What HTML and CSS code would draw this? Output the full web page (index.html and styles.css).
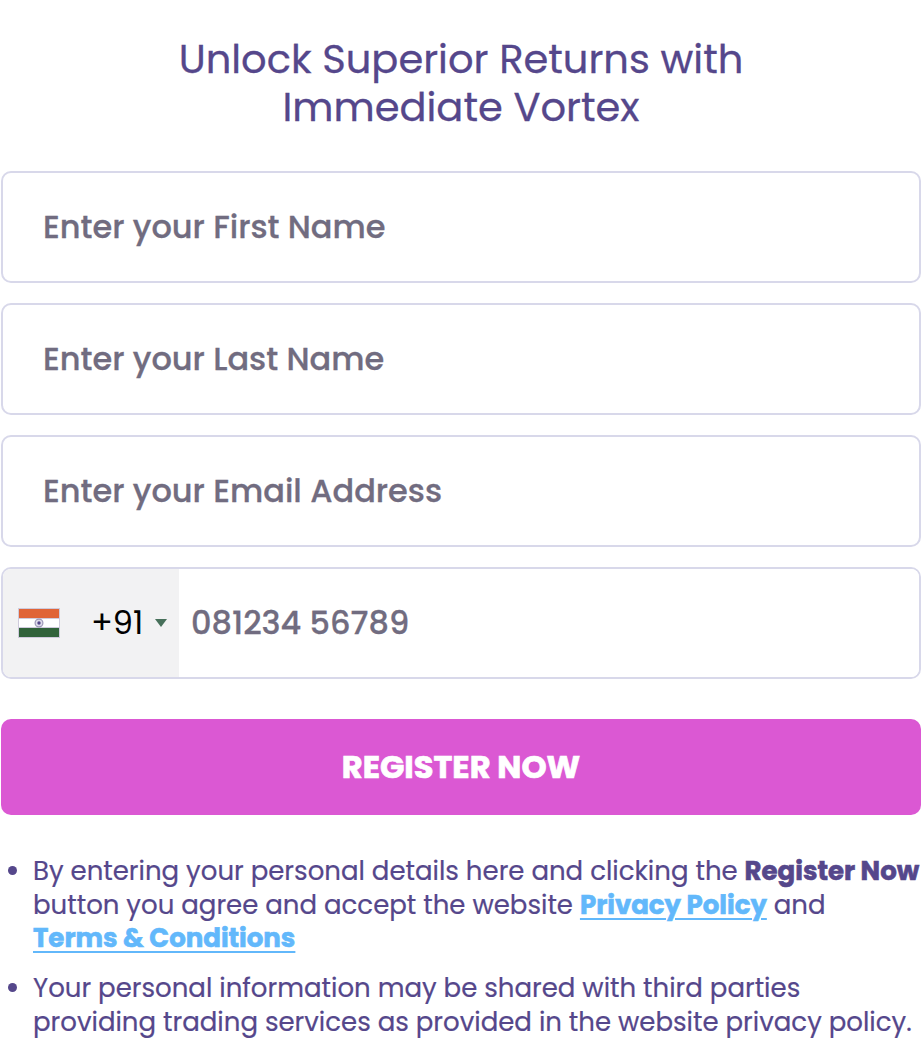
FILE: index.html
```
<!DOCTYPE html>
<html lang="en">
<head>
  <meta charset="utf-8">
  <title>Immediate Vortex</title>
  <link rel="stylesheet" href="styles.css">
</head>
<body>
  <form class="signup" onsubmit="return false">
    <h1 class="title">Unlock Superior Returns with<br>Immediate Vortex</h1>

    <input class="field" type="text" name="first_name" placeholder="Enter your First Name">
    <input class="field" type="text" name="last_name" placeholder="Enter your Last Name">
    <input class="field" type="email" name="email" placeholder="Enter your Email Address">

    <div class="phone">
      <div class="country">
        <svg class="flag" width="42" height="30" viewBox="0 0 42 30">
          <rect width="42" height="30" fill="#cfcbdc"/>
          <rect x="1" y="1" width="40" height="9" fill="#e06437"/>
          <rect x="1" y="11" width="40" height="8" fill="#fff"/>
          <rect x="1" y="20" width="40" height="9" fill="#31633a"/>
          <circle cx="21" cy="15" r="3.9" fill="#dddbea" stroke="#9d98b8" stroke-width="1.2"/>
          <circle cx="21" cy="15" r="1.7" fill="#55478b"/>
        </svg>
        <span class="code">+91</span>
        <span class="arrow"></span>
      </div>
      <input class="number" type="tel" name="phone" placeholder="081234 56789">
    </div>

    <button class="register" type="submit">REGISTER NOW</button>

    <ul class="terms">
      <li>
        By entering your personal details here and clicking the <b>Register Now</b><br>
        button you agree and accept the website <a href="#">Privacy Policy</a> and<br>
        <a href="#">Terms &amp; Conditions</a>
      </li>
      <li>
        Your personal information may be shared with third parties<br>
        providing trading services as provided in the website privacy policy.
      </li>
    </ul>
  </form>
</body>
</html>
```
FILE: styles.css
```
* {
  box-sizing: border-box;
}
body {
  margin: 0;
  background: #fff;
  color: #55478b;
  font-family: Poppins, Inter, sans-serif;
}
.signup {
  width: 920px;
  margin-left: 1px;
  padding-top: 35px;
}
.title {
  margin: 0 0 40px;
  font-size: 40px;
  font-weight: 400;
  line-height: 48px;
  text-align: center;
  -webkit-text-stroke: 0.3px #55478b;
}

/* inputs */
.field {
  display: block;
  width: 100%;
  height: 112px;
  margin-bottom: 20px;
  padding: 0 40px;
  border: 2px solid #d8d8ea;
  border-radius: 10px;
  font: 500 32px Poppins, Inter, sans-serif;
}
::placeholder {
  color: #716c80;
  opacity: 1;
  -webkit-text-stroke: 0.3px #716c80;
}
.phone {
  display: flex;
  height: 112px;
  margin-bottom: 40px;
  border: 2px solid #d8d8ea;
  border-radius: 10px;
  overflow: hidden;
}
.country {
  display: flex;
  align-items: center;
  width: 176px;
  padding-left: 15px;
  background: #f2f2f3;
  color: #000;
}
.code {
  margin-left: 31px;
  font-size: 32px;
}
.arrow {
  margin-left: 12px;
  border: 6px solid transparent;
  border-top: 8px solid #47705a;
  border-bottom: 0;
}
.number {
  flex: 1;
  min-width: 0;
  padding: 0 12px;
  border: 0;
  font: 500 32px Poppins, Inter, sans-serif;
}

.register {
  display: block;
  width: 100%;
  height: 96px;
  border: 0;
  border-radius: 10px;
  background: #db58d3;
  color: #fff;
  font: 700 32px Poppins, Inter, sans-serif;
  -webkit-text-stroke: 0.7px #fff;
}

/* legal notes */
.terms {
  margin: 40px 0 0;
  padding-left: 32px;
  font-size: 26px;
  line-height: 33.6px;
  list-style: none;
  white-space: nowrap;
  -webkit-text-stroke: 0.2px;
}
.terms li {
  position: relative;
  margin-bottom: 16.4px;
}
.terms li::before {
  content: "";
  position: absolute;
  left: -25px;
  top: 11px;
  width: 9px;
  height: 9px;
  border-radius: 50%;
  background: #55478b;
}
.terms b,
.terms a {
  font-weight: 700;
  -webkit-text-stroke: 0.6px;
}
.terms a {
  color: #62b8fb;
  text-decoration-thickness: 2px;
  text-underline-offset: 4px;
}
```
